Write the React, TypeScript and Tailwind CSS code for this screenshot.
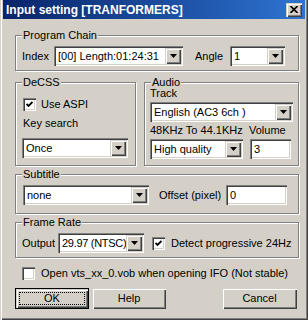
import type { ReactNode } from "react";

const raised =
  "shadow-[inset_1px_1px_0_#d4d0c8,inset_2px_2px_0_#fff,inset_-1px_-1px_0_#404040,inset_-2px_-2px_0_#808080]";
const sunken =
  "shadow-[inset_1px_1px_0_#808080,inset_2px_2px_0_#404040,inset_-1px_-1px_0_#fff,inset_-2px_-2px_0_#d4d0c8]";

const Arrow = () => (
  <svg width="7" height="4" viewBox="0 0 7 4">
    <polygon points="0,0 7,0 3.5,4" fill="#000" />
  </svg>
);

const Combo = ({ text, className = "", textClass = "" }: { text: string; className?: string; textClass?: string }) => (
  <div className={`flex h-[20px] shrink-0 bg-white p-[2px] ${sunken} ${className}`}>
    <span className={`flex-1 overflow-hidden whitespace-nowrap pl-[2px] leading-[16px] ${textClass}`}>{text}</span>
    <div className={`flex h-[16px] w-[16px] shrink-0 items-center justify-center bg-[#d4d0c8] ${raised}`}>
      <Arrow />
    </div>
  </div>
);

const Edit = ({ text, className = "" }: { text: string; className?: string }) => (
  <div className={`h-[20px] shrink-0 bg-white px-[4px] leading-[20px] ${sunken} ${className}`}>{text}</div>
);

const Check = ({ checked }: { checked?: boolean }) => (
  <div className={`flex h-[13px] w-[13px] shrink-0 items-center justify-center bg-white ${sunken}`}>
    {checked && (
      <svg width="7" height="7" viewBox="0 0 7 7">
        <path d="M0.5 3 L2.5 5 L6.5 1" stroke="#000" strokeWidth="1.8" fill="none" />
      </svg>
    )}
  </div>
);

const Group = ({ label, className = "", children }: { label: string; className?: string; children: ReactNode }) => (
  <div className={`relative border border-[#808080] shadow-[inset_1px_1px_0_#fff,1px_1px_0_#fff] ${className}`}>
    <span className="absolute -top-[7px] left-[6px] bg-[#d4d0c8] px-[1px] leading-[13px]">{label}</span>
    {children}
  </div>
);

const Button = ({ label, className = "", isDefault }: { label: string; className?: string; isDefault?: boolean }) => (
  <div className={`relative h-[21px] shrink-0 ${isDefault ? "border border-black" : ""} ${className}`}>
    <div className={`flex h-full items-center justify-center bg-[#d4d0c8] ${raised}`}>{label}</div>
    {isDefault && <div className="absolute inset-[3px] border border-dotted border-black" />}
  </div>
);

export default function App() {
  return (
    <div
      className="flex h-[320px] w-[308px] flex-col bg-[#d4d0c8] text-[11px] text-black shadow-[inset_1px_0_0_#d4d0c8,inset_2px_0_0_#fff,inset_-1px_-1px_0_#404040,inset_-2px_-2px_0_#808080]"
      style={{ fontFamily: '"Liberation Sans", Arial, sans-serif' }}
    >
      {/* title bar */}
      <div className="mx-[3px] flex h-[19px] items-center bg-gradient-to-r from-[#0a246a] to-[#2e74d2] pl-[3px] pr-[3px]">
        <span className="flex-1 pt-[1px] text-[12px] font-bold text-white">Input setting [TRANFORMERS]</span>
        <div className={`flex h-[14px] w-[16px] items-center justify-center bg-[#d4d0c8] ${raised}`}>
          <svg width="8" height="7" viewBox="0 0 8 7">
            <path d="M0.5 0 L7.5 7 M7.5 0 L0.5 7" stroke="#000" strokeWidth="1.6" />
          </svg>
        </div>
      </div>

      <div className="flex flex-1 flex-col pl-[15px] pr-[9px]">
        {/* Program Chain */}
        <Group label="Program Chain" className="mt-[16px] h-[36px]">
          <div className="flex items-center pl-[6px] pt-[10px]">
            <span className="w-[32px]">Index</span>
            <Combo text="[00] Length:01:24:31" className="w-[129px]" />
            <span className="ml-[12px] w-[35px]">Angle</span>
            <Combo text="1" className="w-[55px]" />
          </div>
        </Group>

        <div className="mt-[11px] flex">
          {/* DeCSS */}
          <Group label="DeCSS" className="h-[84px] w-[121px] shrink-0">
            <div className="flex flex-col pl-[7px] pt-[15px]">
              <div className="flex items-center gap-[5px] leading-[13px]">
                <Check checked />
                <span>Use ASPI</span>
              </div>
              <span className="mt-[6px] leading-[13px]">Key search</span>
              <Combo text="Once" className="mt-[8px] w-[106px] -ml-[1px]" />
            </div>
          </Group>

          {/* Audio */}
          <Group label="Audio" className="ml-[8px] h-[84px] flex-1">
            <div className="flex flex-col pl-[5px] pt-[4px]">
              <span className="leading-[13px]">Track</span>
              <Combo text="English (AC3 6ch )" className="mt-[2px] w-[143px]" />
              <div className="mt-[2px] flex leading-[13px]">
                <span className="w-[99px]">48KHz To 44.1KHz</span>
                <span>Volume</span>
              </div>
              <div className="mt-[2px] flex">
                <Combo text="High quality" className="w-[93px]" />
                <Edit text="3" className="ml-[7px] w-[41px]" />
              </div>
            </div>
          </Group>
        </div>

        {/* Subtitle */}
        <Group label="Subtitle" className="mt-[8px] h-[40px]">
          <div className="flex items-center pl-[7px] pt-[10px]">
            <Combo text="none" className="w-[126px]" />
            <span className="ml-[10px] w-[67px]">Offset (pixel)</span>
            <Edit text="0" className="w-[61px]" />
          </div>
        </Group>

        {/* Frame Rate */}
        <Group label="Frame Rate" className="mt-[8px] h-[36px]">
          <div className="flex items-center pl-[6px] pt-[10px]">
            <span className="w-[36px]">Output</span>
            <Combo text="29.97 (NTSC)" className="w-[86px]" textClass="pl-[1px] tracking-[-0.3px]" />
            <div className="ml-[8px] flex items-center gap-[6px]">
              <Check checked />
              <span>Detect progressive 24Hz</span>
            </div>
          </div>
        </Group>

        <div className="mt-[9px] flex items-center gap-[6px] pl-[7px] leading-[13px]">
          <Check />
          <span>Open vts_xx_0.vob when opening IFO (Not stable)</span>
        </div>

        <div className="mt-[8px] flex">
          <Button label="OK" isDefault className="w-[74px]" />
          <Button label="Help" className="ml-[3px] w-[74px]" />
          <Button label="Cancel" className="ml-auto mr-[2px] w-[75px]" />
        </div>
      </div>
    </div>
  );
}
